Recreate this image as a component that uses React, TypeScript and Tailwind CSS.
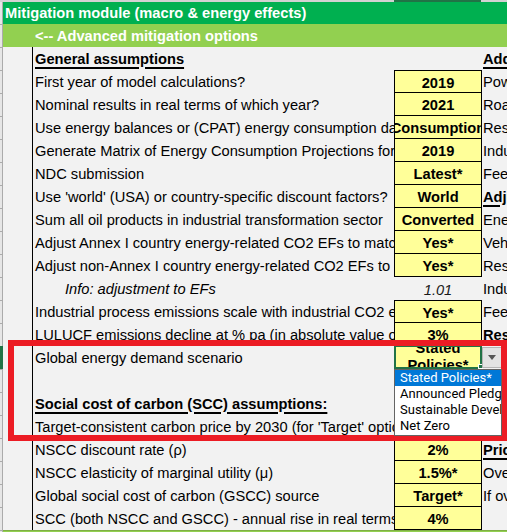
import React from 'react';

type Kind = 'plain' | 'heading' | 'bold';

type Row = {
  label: string;
  labelKind?: Kind | 'info';
  value?: string;
  valueKind?: 'box' | 'info' | 'selected';
  top?: boolean;
  right?: string;
  rightKind?: Kind;
};

const rows: Row[] = [
  { label: 'General assumptions', labelKind: 'heading', right: 'Additional assumptions', rightKind: 'heading' },
  { label: 'First year of model calculations?', value: '2019', top: true, right: 'Power sector' },
  { label: 'Nominal results in real terms of which year?', value: '2021', right: 'Road transport' },
  { label: 'Use energy balances or (CPAT) energy consumption data?', value: 'Consumption', right: 'Residential' },
  { label: 'Generate Matrix of Energy Consumption Projections for year', value: '2019', right: 'Industry' },
  { label: 'NDC submission', value: 'Latest*', right: 'Feebates' },
  { label: "Use 'world' (USA) or country-specific discount factors?", value: 'World', right: 'Adjustments', rightKind: 'heading' },
  { label: 'Sum all oil products in industrial transformation sector', value: 'Converted', right: 'Energy' },
  { label: 'Adjust Annex I country energy-related CO2 EFs to match', value: 'Yes*', right: 'Vehicles' },
  { label: 'Adjust non-Annex I country energy-related CO2 EFs to match', value: 'Yes*', right: 'Residential' },
  { label: 'Info: adjustment to EFs', labelKind: 'info', value: '1.01', valueKind: 'info', right: 'Industry' },
  { label: 'Industrial process emissions scale with industrial CO2 emissions', value: 'Yes*', top: true, right: 'Feebates' },
  { label: 'LULUCF emissions decline at % pa (in absolute value of)', value: '3%', right: 'Results', rightKind: 'bold' },
  { label: 'Global energy demand scenario', value: 'Stated Policies*', valueKind: 'selected' },
  { label: '' },
  { label: 'Social cost of carbon (SCC) assumptions:', labelKind: 'heading' },
  { label: "Target-consistent carbon price by 2030 (for 'Target' option)", value: '$75', top: true },
  { label: 'NSCC discount rate (ρ)', value: '2%', right: 'Pricing', rightKind: 'heading' },
  { label: 'NSCC elasticity of marginal utility (μ)', value: '1.5%*', right: 'Overrides' },
  { label: 'Global social cost of carbon (GSCC) source', value: 'Target*', right: 'If overriding' },
  { label: 'SCC (both NSCC and GSCC) - annual rise in real terms', value: '4%' },
];

const options = ['Stated Policies*', 'Announced Pledges', 'Sustainable Development', 'Net Zero'];

function Label({ r }: { r: Row }) {
  if (r.labelKind === 'heading') {
    return <span className="font-bold underline decoration-2 underline-offset-[3px]">{r.label}</span>;
  }
  if (r.labelKind === 'info') {
    return <span className="italic pl-[30px]">{r.label}</span>;
  }
  return <span>{r.label}</span>;
}

function Value({ r }: { r: Row }) {
  if (!r.value) return <div />;
  if (r.valueKind === 'info') {
    return <div className="flex items-center justify-center pt-[2px] italic text-[#1a1a1a]">{r.value}</div>;
  }
  if (r.valueKind === 'selected') {
    return (
      <div className="relative flex items-center justify-center overflow-hidden bg-[#ffff99] border-2 border-[#217346] -mt-px font-bold">
        <div className="text-center leading-[17px] w-[70px]">{r.value}</div>
      </div>
    );
  }
  return (
    <div
      className={`flex items-center justify-center overflow-hidden whitespace-nowrap bg-[#ffff99] border-x border-b border-black pt-[2px] font-bold ${r.top ? 'border-t' : ''}`}
    >
      {r.value}
    </div>
  );
}

function Right({ r }: { r: Row }) {
  if (!r.right) return <div />;
  const cls =
    r.rightKind === 'heading'
      ? 'font-bold underline decoration-2 underline-offset-[3px]'
      : r.rightKind === 'bold'
        ? 'font-bold'
        : '';
  return (
    <div className="flex items-center pl-px whitespace-nowrap overflow-hidden">
      <span className={cls}>{r.right}</span>
    </div>
  );
}

export default function App() {
  return (
    <div className="relative w-[507px] h-[532px] overflow-hidden bg-[#f2f2f2] font-['Liberation_Sans',Arial,sans-serif] text-[14.67px] text-black">
      {/* column header edge */}
      <div className="h-[2px] bg-[#d2d2d2] flex">
        <div className="w-[394px]" />
        <div className="w-[87px] bg-[#217346]" />
      </div>

      {/* title rows */}
      <div className="grid grid-cols-[3px_1fr] h-[22px]">
        <div className="bg-[#e6e6e6] border-r border-[#ababab]" />
        <div className="bg-[#00b050] text-white font-bold flex items-center pl-[2px] whitespace-nowrap">
          Mitigation module (macro &amp; energy effects)
        </div>
      </div>
      <div className="grid grid-cols-[3px_1fr] h-[23px]">
        <div className="bg-[#e6e6e6] border-r border-t border-[#ababab]" />
        <div className="bg-[#92d050] text-white font-bold flex items-center pl-[32px] whitespace-nowrap">
          &lt;-- Advanced mitigation options
        </div>
      </div>

      {/* sheet rows */}
      {rows.map((r, i) => (
        <div key={i} className="grid grid-cols-[3px_29px_362px_88px_1fr] h-[23px]">
          <div
            className={
              i === 13
                ? 'bg-[#217346] border-r border-b border-[#217346]'
                : 'bg-[#e6e6e6] border-r border-t border-[#ababab]'
            }
          />
          <div />
          <div className="border-l border-black flex items-center pl-[2px] whitespace-nowrap overflow-hidden">
            <Label r={r} />
          </div>
          <Value r={r} />
          <Right r={r} />
        </div>
      ))}

      {/* next row, cut off */}
      <div className="grid grid-cols-[3px_1fr] h-[23px]">
        <div className="bg-[#e6e6e6] border-r border-t border-[#ababab]" />
        <div className="bg-[#92d050] border-t border-[#7fae45]" />
      </div>

      {/* fill handle */}
      <div className="absolute left-[478px] top-[364px] w-[5px] h-[5px] bg-[#217346] border border-white" />

      {/* dropdown arrow */}
      <div className="absolute left-[482px] top-[347px] w-[20px] h-[21px] bg-[#e3e3e3] border border-[#b5b5b5] flex items-center justify-center">
        <svg width="8" height="5" viewBox="0 0 8 5">
          <path d="M0 0h8L4 5z" fill="#555" />
        </svg>
      </div>

      {/* red highlight frame */}
      <div className="absolute left-[8px] top-[340px] w-[499px] h-[101px] border-[6px] border-[#ec1c24]" />

      {/* open dropdown list */}
      <div className="absolute left-[394px] top-[369px] w-[108px] h-[67px] bg-white border border-[#646464] overflow-hidden font-['Roboto',sans-serif] text-[13px]">
        {options.map((o, i) => (
          <div
            key={o}
            className={`h-[16px] leading-[16px] pl-[5px] whitespace-nowrap ${i === 0 ? 'bg-[#0078d7] text-white' : 'text-black'}`}
          >
            {o}
          </div>
        ))}
      </div>
    </div>
  );
}
